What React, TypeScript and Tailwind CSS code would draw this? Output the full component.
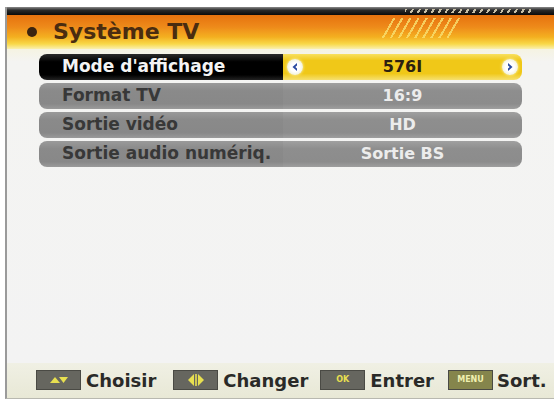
import React from "react";

const font = { fontFamily: '"DejaVu Sans", "Liberation Sans", sans-serif' };

function Arrow({ dir }: { dir: "l" | "r" }) {
  return (
    <div className="w-[16px] h-[16px] rounded-full bg-[radial-gradient(circle,#ffffff_40%,#e6e6b8_100%)] flex items-center justify-center shadow-[0_0_3px_#fff8c0]">
      <svg width="10" height="10" viewBox="0 0 10 10">
        {dir === "l" ? (
          <path d="M7 1 L2.5 5 L7 9 L7 6.5 L5.3 5 L7 3.5 Z" fill="#2a4aa0" />
        ) : (
          <path d="M3 1 L7.5 5 L3 9 L3 6.5 L4.7 5 L3 3.5 Z" fill="#2a4aa0" />
        )}
      </svg>
    </div>
  );
}

function Row({
  label,
  value,
  selected,
}: {
  label: string;
  value: string;
  selected?: boolean;
}) {
  if (selected) {
    return (
      <div className="flex h-[26px] mb-[3px]">
        <div className="w-[244px] rounded-l-[8px] bg-[linear-gradient(#2a2a2a,#000_30%,#000_80%,#222)] flex items-center pl-[23px] text-[17px] font-bold text-[#f4f4f4]">
          {label}
        </div>
        <div className="w-[239px] rounded-r-[8px] bg-[linear-gradient(#f8e060,#f0c818_25%,#f0c818_75%,#f6e070)] flex items-center justify-between px-[4px] relative">
          <Arrow dir="l" />
          <span className="text-[16px] font-bold text-[#2a2010]">{value}</span>
          <Arrow dir="r" />
        </div>
      </div>
    );
  }
  return (
    <div className="flex h-[26px] mb-[3px]">
      <div className="w-[244px] rounded-l-[8px] bg-[linear-gradient(#9a9a9a,#8a8a8a_30%,#888_80%,#9a9a9a)] flex items-center pl-[23px] text-[17px] font-bold text-[#383838]">
        {label}
      </div>
      <div className="w-[239px] rounded-r-[8px] bg-[linear-gradient(#a0a0a0,#8e8e8e_30%,#8c8c8c_80%,#9e9e9e)] flex items-center justify-center text-[16px] font-bold text-[#ececec]">
        {value}
      </div>
    </div>
  );
}

function KeyBox({ children, olive }: { children: React.ReactNode; olive?: boolean }) {
  return (
    <div
      className={
        "w-[45px] h-[20px] border border-[#4a4a44] flex items-center justify-center " +
        (olive ? "bg-[#85854c]" : "bg-[#66665f]")
      }
    >
      {children}
    </div>
  );
}

export default function App() {
  return (
    <div className="w-[554px] h-[401px] bg-white overflow-hidden pt-[7px] pl-[5px]" style={font}>
      <div className="h-[392px] flex flex-col border-l-[2px] border-[#9a9a9a] border-b border-b-[#b8b8b0]">
        {/* top dark bar */}
        <div className="h-[8px] bg-[linear-gradient(#8a8a8a,#2a2a2a_40%,#0a0a0a)] relative">
          <div className="absolute left-[398px] top-[2px] w-[126px] h-[4px] bg-[repeating-linear-gradient(120deg,#c8c0a8_0px,#c8c0a8_2px,transparent_2px,transparent_6px)]" />
        </div>
        {/* header */}
        <div className="h-[34px] bg-[linear-gradient(#e6720e,#ee8a1a_35%,#f4b020_65%,#f8d848_85%,#faf0b0)] relative flex items-center">
          <div className="w-[10px] h-[10px] rounded-full bg-[#3a2410] ml-[20px] mr-[16px]" />
          <span className="text-[22px] font-bold text-[#4a2c10] leading-none">Système TV</span>
          <div className="absolute left-[370px] top-[3px] w-[88px] h-[20px] bg-[repeating-linear-gradient(120deg,#f8e070_0px,#f8e070_2px,transparent_2px,transparent_7px)] opacity-80 [clip-path:polygon(14%_0,100%_0,86%_100%,0_100%)]" />
        </div>
        {/* body */}
        <div className="flex-1 bg-[linear-gradient(#f5f3e2,#f4f4f2_4%,#f3f3f3)] pl-[32px] pt-[5px]">
          <Row label="Mode d'affichage" value="576I" selected />
          <Row label="Format TV" value="16:9" />
          <Row label="Sortie vidéo" value="HD" />
          <Row label="Sortie audio numériq." value="Sortie BS" />
        </div>
        {/* footer */}
        <div className="h-[35px] bg-[linear-gradient(#f0f0e4,#e8e8d6)] flex items-center pl-[29px] pb-[1px] text-[18px] font-bold text-[#2a2a28]">
          <KeyBox>
            <svg width="22" height="10" viewBox="0 0 22 10">
              <path d="M2 8 L7 2 L12 8 Z" fill="#e8e050" />
              <path d="M11 2 L20 2 L15.5 8 Z" fill="#e8e050" />
            </svg>
          </KeyBox>
          <span className="ml-[5px] mr-[17px]">Choisir</span>
          <KeyBox>
            <svg width="20" height="14" viewBox="0 0 20 14">
              <path d="M8 1 L2 7 L8 13 Z" fill="#e8e050" />
              <rect x="9.2" y="1" width="1.6" height="12" fill="#e8e050" />
              <path d="M12 1 L18 7 L12 13 Z" fill="#e8e050" />
            </svg>
          </KeyBox>
          <span className="ml-[5px] mr-[12px]">Changer</span>
          <KeyBox>
            <span className="text-[8px] leading-none text-[#e8e050] font-bold">OK</span>
          </KeyBox>
          <span className="ml-[5px] mr-[14px]">Entrer</span>
          <KeyBox olive>
            <span className="text-[8px] leading-none text-[#f0f0b0] font-bold">MENU</span>
          </KeyBox>
          <span className="ml-[4px]">Sort.</span>
        </div>
      </div>
    </div>
  );
}
